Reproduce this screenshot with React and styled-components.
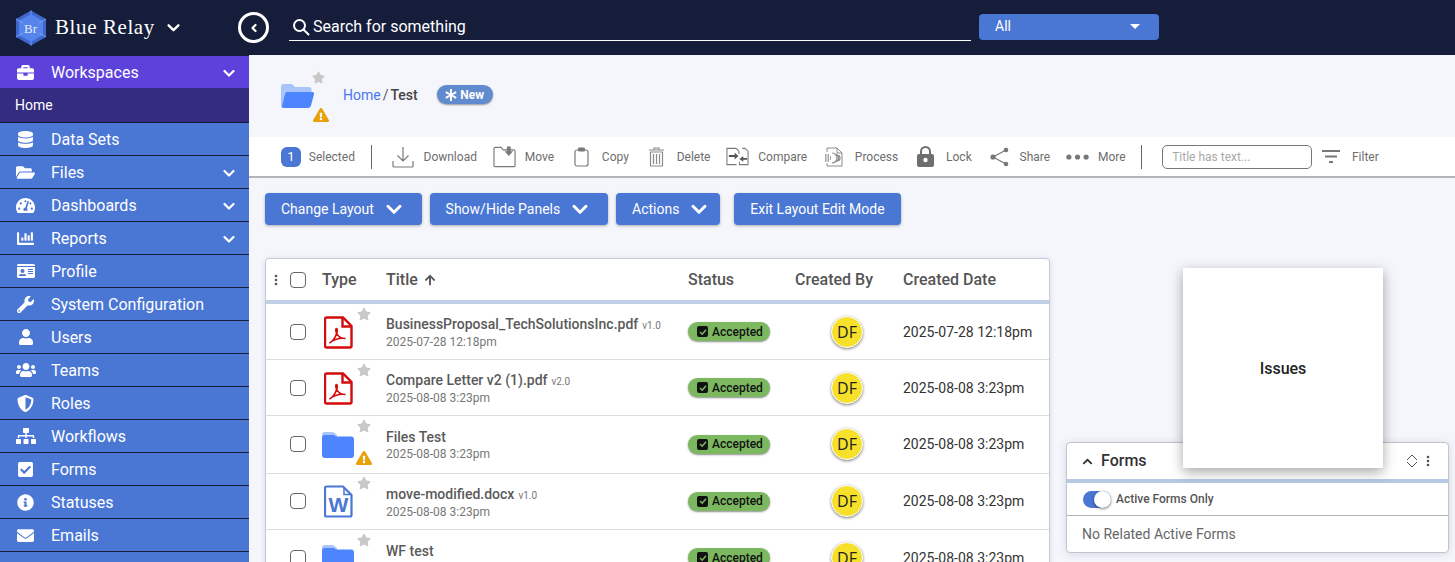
import React from 'react';
import styled, {createGlobalStyle} from 'styled-components';
import {
    FaBriefcase, FaDatabase, FaFolderOpen, FaTachometerAlt, FaChartBar, FaIdCard, FaWrench, FaUser,
    FaUsers, FaShieldAlt, FaSitemap, FaCheckSquare, FaInfoCircle, FaEnvelope, FaStar, FaFolder,
    FaExclamationTriangle, FaAsterisk, FaArrowUp, FaChevronUp
} from 'react-icons/fa';

const GlobalStyle = createGlobalStyle`
  html, body {
    margin: 0;
    height: 562px;
    overflow: hidden;
    background: #f5f6fb;
    font-family: Roboto, "Liberation Sans", sans-serif;
  }
  * { box-sizing: border-box; }
`

const navItems = [
    {label: 'Data Sets', icon: FaDatabase, size: 17},
    {label: 'Files', icon: FaFolderOpen, size: 19, more: true},
    {label: 'Dashboards', icon: FaTachometerAlt, size: 19, more: true},
    {label: 'Reports', icon: FaChartBar, size: 17, more: true},
    {label: 'Profile', icon: FaIdCard, size: 18},
    {label: 'System Configuration', icon: FaWrench, size: 17},
    {label: 'Users', icon: FaUser, size: 16},
    {label: 'Teams', icon: FaUsers, size: 20},
    {label: 'Roles', icon: FaShieldAlt, size: 17},
    {label: 'Workflows', icon: FaSitemap, size: 20},
    {label: 'Forms', icon: FaCheckSquare, size: 17},
    {label: 'Statuses', icon: FaInfoCircle, size: 17},
    {label: 'Emails', icon: FaEnvelope, size: 17},
    {label: 'Templates', icon: FaFolder, size: 17},
]

const rows = [
    {title: 'BusinessProposal_TechSolutionsInc.pdf', version: 'v1.0', date: '2025-07-28 12:18pm', kind: 'pdf', height: 56},
    {title: 'Compare Letter v2 (1).pdf', version: 'v2.0', date: '2025-08-08 3:23pm', kind: 'pdf', height: 56},
    {title: 'Files Test', date: '2025-08-08 3:23pm', kind: 'folder', warn: true, height: 58, lift: 1},
    {title: 'move-modified.docx', version: 'v1.0', date: '2025-08-08 3:23pm', kind: 'word', height: 56, lift: 1},
    {title: 'WF test', date: '2025-08-08 3:23pm', kind: 'folder', height: 56},
]

const Chevron = ({size = 12, width = 2.2}) => (
    <svg width={size} height={size} viewBox="0 0 12 12" fill="none" stroke="currentColor" strokeWidth={width} strokeLinecap="round" strokeLinejoin="round">
        <polyline points="1.5,4 6,8.5 10.5,4"/>
    </svg>
)

const Logo = () => (
    <svg width="32" height="36" viewBox="0 0 32 36">
        <polygon points="16,0.5 31,9 31,27 16,35.5 1,27 1,9" fill="#3f66cc"/>
        <polygon points="16,4 28,11 28,25 16,32 4,25 4,11" fill="#5584ea"/>
        <path d="M16 0.500V4M1 9l7 4M31 9l-7 4M1 27l7-4M31 27l-7-4M16 35.500V32" stroke="#7b9ff0" strokeWidth="1"/>
        <text x="15.500" y="23" textAnchor="middle" fontFamily="Liberation Serif, serif" fontSize="13" fill="#e6ecfc">Br</text>
    </svg>
)

const PdfIcon = () => (
    <svg width="29" height="33" viewBox="0 0 29 33" fill="none" stroke="#d40b0b">
        <path d="M2.500 1.500H19L27.500 10V30a1.500 1.500 0 0 1-1.500 1.500H2.500A1.500 1.500 0 0 1 1 30V3a1.500 1.500 0 0 1 1.500-1.500Z" strokeWidth="2.400"/>
        <path d="M18.500 2V10.500H27" strokeWidth="2.400"/>
        <path d="M5.500 27c3-1.500 6-6 7.500-10.500.6-2 .4-4-.5-4s-1 2 0 4.500c1.500 3.500 4 5.500 9 5.500-4-.5-11 .5-16 4.500Z" strokeWidth="1.600"/>
    </svg>
)

const WordIcon = () => (
    <svg width="29" height="33" viewBox="0 0 29 33" fill="none" stroke="#4a76d4">
        <path d="M2.500 1.500H19L27.500 10V30a1.500 1.500 0 0 1-1.500 1.500H2.500A1.500 1.500 0 0 1 1 30V3a1.500 1.500 0 0 1 1.500-1.500Z" strokeWidth="2.200"/>
        <path d="M20 3V9.500H26.500" strokeWidth="1.500"/>
        <text x="14.500" y="27" textAnchor="middle" fontFamily="Liberation Sans, sans-serif" fontWeight="700" fontSize="21" fill="#4a76d4" stroke="none">W</text>
    </svg>
)

const ClosedFolder = () => (
    <svg width="32" height="26" viewBox="0 0 32 26">
        <path d="M0 3a3 3 0 0 1 3-3h8l4 3v4H0Z" fill="#a9c4fb"/>
        <path d="M0 6a3 3 0 0 1 3-3h9l2 1.500h15a3 3 0 0 1 3 3V23a3 3 0 0 1-3 3H3a3 3 0 0 1-3-3Z" fill="#4d85ff"/>
    </svg>
)

const OpenFolder = () => (
    <svg width="33" height="24" viewBox="0 0 33 24">
        <path d="M0 3a3 3 0 0 1 3-3h8l3 3h14a2.500 2.500 0 0 1 2.500 2.500V8H4L2 24a2 2 0 0 1-2-2Z" fill="#a9c4fb"/>
        <path d="M5.500 8H31a2 2 0 0 1 2 2.300L30 21.500A3 3 0 0 1 27 24H2.500a1.500 1.500 0 0 1-1.400-2L4 9.500A2 2 0 0 1 5.500 8Z" fill="#4d85ff"/>
    </svg>
)

const toolIcons = {
    download: (
        <svg width="22" height="22" viewBox="0 0 22 22" fill="none" stroke="#7a7a7a" strokeWidth="1.200">
            <path d="M11 1v14M5.500 9.500 11 15l5.500-5.500"/>
            <path d="M1 15v5a1 1 0 0 0 1 1h18a1 1 0 0 0 1-1v-5"/>
        </svg>
    ),
    move: (
        <svg width="24" height="22" viewBox="0 0 24 22" fill="none" stroke="#7a7a7a" strokeWidth="1.200">
            <path d="M1 20V2.500A1.500 1.500 0 0 1 2.500 1h6l2 2.500h11A1.500 1.500 0 0 1 23 5v15a1 1 0 0 1-1 1H2a1 1 0 0 1-1-1Z"/>
            <path d="M14.500 0h4v5h2.500l-4.500 5-4.500-5h2.500Z" fill="#7a7a7a" stroke="none"/>
        </svg>
    ),
    copy: (
        <svg width="15" height="20" viewBox="0 0 15 20" fill="none" stroke="#7a7a7a" strokeWidth="1.200">
            <rect x="1" y="3" width="13" height="16" rx="2"/>
            <rect x="4.500" y="1" width="6" height="3" rx="1" fill="#7a7a7a"/>
        </svg>
    ),
    trash: (
        <svg width="15" height="20" viewBox="0 0 15 20" fill="none" stroke="#8a8a8a" strokeWidth="1.200">
            <path d="M0 3h15M5 3V1h5v2"/>
            <path d="M1.500 5h12v14h-12ZM4.500 7v10M7.500 7v10M10.500 7v10"/>
        </svg>
    ),
    compare: (
        <svg width="24" height="19" viewBox="0 0 24 19" fill="none" stroke="#7a7a7a" strokeWidth="1.100">
            <path d="M11 18H1V1h9.500l3 3v3"/>
            <path d="M17 1h3l3 3v14h-9v-3"/>
            <path d="M3 8h6V5.500l4 3.500-4 3.500V10H3Z" fill="#555" stroke="none"/>
            <path d="M22 13h-4v2l-4-3 4-3v2h4Z" fill="#555" stroke="none"/>
        </svg>
    ),
    process: (
        <svg width="18" height="20" viewBox="0 0 18 20" fill="none" stroke="#8a8a8a" strokeWidth="1">
            <path d="M2 5V1h10l5 5v13H2v-3"/>
            <path d="M12 1v5h5"/>
            <path d="M0 8h5M0 10h6M0 12h6M0 14h5" strokeWidth="1.300" strokeDasharray="1.500 1"/>
            <path d="M7 6a5 5 0 0 1 0 10M9.500 7a4 4 0 0 1 0 8M12 8a3 3 0 0 1 0 6" strokeWidth="1.200"/>
        </svg>
    ),
    lock: (
        <svg width="17" height="21" viewBox="0 0 17 21">
            <path d="M4 9V5.500a4.500 4.500 0 0 1 9 0V9" fill="none" stroke="#6e6e6e" strokeWidth="2"/>
            <rect x="0" y="8" width="17" height="13" rx="2" fill="#6e6e6e"/>
            <circle cx="8.500" cy="14" r="2.200" fill="#fff"/>
        </svg>
    ),
    share: (
        <svg width="19" height="20" viewBox="0 0 19 20" fill="#777" stroke="#777">
            <path d="M16 3 3 10l13 7" fill="none" strokeWidth="1.200"/>
            <circle cx="16" cy="3" r="2.300" stroke="none"/>
            <circle cx="3" cy="10" r="2.600" stroke="none"/>
            <circle cx="16" cy="17" r="2.300" stroke="none"/>
        </svg>
    ),
    more: (
        <svg width="24" height="8" viewBox="0 0 24 8" fill="#777">
            <circle cx="3" cy="4" r="2.700"/>
            <circle cx="12" cy="4" r="2.700"/>
            <circle cx="21" cy="4" r="2.700"/>
        </svg>
    ),
    filter: (
        <svg width="18" height="14" viewBox="0 0 18 14" fill="#777">
            <rect x="0" y="0" width="18" height="2"/>
            <rect x="3" y="5.500" width="12" height="2"/>
            <rect x="7" y="11" width="4" height="2"/>
        </svg>
    ),
}

const tools = [
    {label: 'Download', icon: toolIcons.download},
    {label: 'Move', icon: toolIcons.move},
    {label: 'Copy', icon: toolIcons.copy},
    {label: 'Delete', icon: toolIcons.trash},
    {label: 'Compare', icon: toolIcons.compare},
    {label: 'Process', icon: toolIcons.process},
    {label: 'Lock', icon: toolIcons.lock},
    {label: 'Share', icon: toolIcons.share},
    {label: 'More', icon: toolIcons.more},
]

const Kebab = () => (
    <svg width="4" height="12" viewBox="0 0 4 12" fill="#555">
        <circle cx="2" cy="2" r="1.300"/>
        <circle cx="2" cy="6" r="1.300"/>
        <circle cx="2" cy="10" r="1.300"/>
    </svg>
)

const App = () => {
    return (
        <Page>
            <GlobalStyle/>
            <TopBar>
                <Brand>
                    <Logo/>
                    <BrandName>Blue Relay</BrandName>
                    <Chevron size={13}/>
                </Brand>
                <BackButton>
                    <svg width="10" height="10" viewBox="0 0 10 10" fill="none" stroke="#fff" strokeWidth="2.200" strokeLinecap="round" strokeLinejoin="round">
                        <polyline points="6.500,2 3.500,5 6.500,8"/>
                    </svg>
                </BackButton>
                <SearchField>
                    <svg width="18" height="18" viewBox="0 0 18 18" fill="none" stroke="#fff" strokeWidth="2">
                        <circle cx="7.500" cy="7.500" r="5.500"/>
                        <path d="M11.500 11.500 16.500 16.500" strokeLinecap="round"/>
                    </svg>
                    Search for something
                </SearchField>
                <ScopeSelect>
                    All
                    <Caret/>
                </ScopeSelect>
            </TopBar>
            <Body>
                <Sidebar>
                    <NavGroup>
                        <FaBriefcase size={17}/>
                        <span>Workspaces</span>
                        <NavChevron><Chevron/></NavChevron>
                    </NavGroup>
                    <NavSub>Home</NavSub>
                    {navItems.map(item => (
                        <NavRow key={item.label}>
                            <NavIcon><item.icon size={item.size}/></NavIcon>
                            <span>{item.label}</span>
                            {item.more && <NavChevron><Chevron/></NavChevron>}
                        </NavRow>
                    ))}
                </Sidebar>
                <Main>
                    <Crumbs>
                        <CrumbIcon>
                            <OpenFolder/>
                            <HeadStar><FaStar size={13}/></HeadStar>
                            <HeadWarn><FaExclamationTriangle size={16}/></HeadWarn>
                        </CrumbIcon>
                        <CrumbLink>Home</CrumbLink>
                        <CrumbSep>/</CrumbSep>
                        <CrumbHere>Test</CrumbHere>
                        <NewPill><FaAsterisk size={12}/>New</NewPill>
                    </Crumbs>
                    <Toolbar>
                        <SelectedBadge>1</SelectedBadge>
                        <ToolLabel>Selected</ToolLabel>
                        <ToolDivider/>
                        {tools.map(t => (
                            <Tool key={t.label}>
                                <ToolIcon>{t.icon}</ToolIcon>
                                <ToolLabel>{t.label}</ToolLabel>
                            </Tool>
                        ))}
                        <ToolDivider/>
                        <TitleInput placeholder="Title has text..."/>
                        <Tool>
                            <ToolIcon>{toolIcons.filter}</ToolIcon>
                            <ToolLabel>Filter</ToolLabel>
                        </Tool>
                    </Toolbar>
                    <Actions>
                        <ActionButton>Change Layout<Chevron size={16}/></ActionButton>
                        <ActionButton>Show/Hide Panels<Chevron size={16}/></ActionButton>
                        <ActionButton $right={13}>Actions<Chevron size={16}/></ActionButton>
                        <ActionButton $right={16} $apart>Exit Layout Edit Mode</ActionButton>
                    </Actions>
                    <Panels>
                        <TableCard>
                            <HeadRow>
                                <KebabCell><Kebab/></KebabCell>
                                <Check/>
                                <span>Type</span>
                                <TitleHead>Title <FaArrowUp size={12}/></TitleHead>
                                <span>Status</span>
                                <span>Created By</span>
                                <span>Created Date</span>
                            </HeadRow>
                            {rows.map(r => (
                                <Row key={r.title} $height={r.height} $lift={r.lift}>
                                    <span/>
                                    <Check/>
                                    <TypeCell $indent={r.kind === 'folder' ? 0 : 2}>
                                        {r.kind === 'pdf' && <PdfIcon/>}
                                        {r.kind === 'word' && <WordIcon/>}
                                        {r.kind === 'folder' && <ClosedFolder/>}
                                        <RowStar><FaStar size={14}/></RowStar>
                                        {r.warn && <RowWarn><FaExclamationTriangle size={16}/></RowWarn>}
                                    </TypeCell>
                                    <TitleCell>
                                        <FileName>{r.title}{r.version && <Version>{r.version}</Version>}</FileName>
                                        <FileDate>{r.date}</FileDate>
                                    </TitleCell>
                                    <div>
                                        <StatusPill>
                                            <StatusBox>
                                                <svg width="8" height="8" viewBox="0 0 8 8" fill="none" stroke="#7cb860" strokeWidth="1.500">
                                                    <polyline points="1,4 3.200,6.200 7,1.800"/>
                                                </svg>
                                            </StatusBox>
                                            Accepted
                                        </StatusPill>
                                    </div>
                                    <AvatarCell><Avatar>DF</Avatar></AvatarCell>
                                    <CreatedDate>{r.date}</CreatedDate>
                                </Row>
                            ))}
                        </TableCard>
                        <FormsCard>
                            <FormsHead>
                                <FaChevronUp size={11}/>
                                <FormsTitle>Forms</FormsTitle>
                                <svg width="12" height="14" viewBox="0 0 12 14" fill="none" stroke="#555" strokeWidth="1">
                                    <path d="M1 6 6 1l5 5M1 8l5 5 5-5"/>
                                </svg>
                                <Kebab/>
                            </FormsHead>
                            <ToggleRow>
                                <Toggle><Knob/></Toggle>
                                Active Forms Only
                            </ToggleRow>
                            <EmptyNote>No Related Active Forms</EmptyNote>
                        </FormsCard>
                    </Panels>
                    <FloatingCard>Issues</FloatingCard>
                </Main>
            </Body>
        </Page>
    );
};

const Page = styled.div`
  height: 562px;
  overflow: hidden;
`
const TopBar = styled.header`
  height: 55px;
  background: #151d3b;
  display: flex;
  align-items: center;
  color: #fff;
`
const Brand = styled.div`
  width: 238px;
  padding-left: 15px;
  display: flex;
  align-items: center;
  color: #fff;
`
const BrandName = styled.span`
  font-family: "Liberation Serif", serif;
  font-size: 21px;
  letter-spacing: 0.6px;
  margin: 0 12px 0 8px;
`
const BackButton = styled.div`
  width: 31px;
  height: 31px;
  border: 3px solid #fff;
  border-radius: 50%;
  display: flex;
  align-items: center;
  justify-content: center;
`
const SearchField = styled.div`
  width: 682px;
  height: 26px;
  margin: 0 8px 0 20px;
  padding: 0 0 1px 3px;
  border-bottom: 1px solid #fff;
  display: flex;
  align-items: center;
  gap: 3px;
  font-size: 16px;
`
const ScopeSelect = styled.div`
  width: 180px;
  height: 26px;
  margin-bottom: 1px;
  background: #4a76d4;
  border-radius: 4px;
  padding: 0 19px 2px 16px;
  display: flex;
  align-items: center;
  justify-content: space-between;
  font-size: 14px;
`
const Caret = styled.span`
  width: 0;
  height: 0;
  border-left: 5px solid transparent;
  border-right: 5px solid transparent;
  border-top: 5px solid #fff;
`
const Body = styled.div`
  display: flex;
  height: 507px;
`
const Sidebar = styled.nav`
  width: 249px;
  flex: none;
  background: #4a76d4;
  color: #fff;
  font-size: 16px;
  padding-top: 1px;
  box-shadow: inset 0 1px 0 #151d3b;
`
const NavGroup = styled.div`
  height: 32px;
  background: #5c42da;
  display: flex;
  align-items: center;
  gap: 17px;
  padding-left: 17px;
  position: relative;
`
const NavSub = styled.div`
  height: 35px;
  background: #332c80;
  border-bottom: 1px solid #151d3b;
  font-size: 14px;
  padding-left: 15px;
  display: flex;
  align-items: center;
`
const NavRow = styled.div`
  height: 33px;
  border-bottom: 1px solid #151d3b;
  display: flex;
  align-items: center;
  position: relative;
`
const NavIcon = styled.span`
  width: 51px;
  display: flex;
  justify-content: center;
`
const NavChevron = styled.span`
  position: absolute;
  right: 14px;
  top: 11px;
  display: flex;
`
const Main = styled.main`
  flex: 1;
  position: relative;
  min-width: 0;
`
const Crumbs = styled.div`
  height: 82px;
  padding: 0 0 3px 32px;
  display: flex;
  align-items: center;
  font-size: 14px;
`
const CrumbIcon = styled.div`
  position: relative;
  width: 62px;
  display: flex;
  padding-top: 2px;
`
const HeadStar = styled.span`
  position: absolute;
  left: 31px;
  top: -11px;
  color: #c8c8c8;
`
const HeadWarn = styled.span`
  position: absolute;
  left: 32px;
  top: 25px;
  color: #e8a208;
`
const CrumbLink = styled.span`
  color: #4a76f0;
`
const CrumbSep = styled.span`
  color: #555;
  margin: 0 2px;
`
const CrumbHere = styled.span`
  color: #444;
  font-weight: 500;
`
const NewPill = styled.span`
  height: 19px;
  width: 56px;
  margin-left: 19px;
  border-radius: 10px;
  background: #618bcf;
  color: #fff;
  font-size: 12px;
  font-weight: 700;
  display: flex;
  align-items: center;
  justify-content: center;
  gap: 3px;
  box-shadow: 0 1px 2px rgba(0, 0, 0, .4);
`
const Toolbar = styled.div`
  height: 41px;
  background: #fff;
  border-bottom: 2px solid #b5b5b8;
  padding-left: 32px;
  display: flex;
  align-items: center;
  gap: 15.8px;
`
const SelectedBadge = styled.span`
  width: 20px;
  height: 20px;
  border-radius: 6px;
  background: #4a76d4;
  color: #fff;
  font-size: 13px;
  display: flex;
  align-items: center;
  justify-content: center;
  margin-right: -8px;
`
const ToolLabel = styled.span`
  font-size: 12px;
  color: #6e6e6e;
`
const ToolDivider = styled.span`
  width: 1px;
  height: 24px;
  background: #666;
  margin-right: 4px;
`
const Tool = styled.div`
  display: flex;
  align-items: center;
  gap: 9px;
`
const ToolIcon = styled.span`
  width: 23px;
  display: flex;
  justify-content: center;
`
const TitleInput = styled.input`
  width: 150px;
  height: 24px;
  margin-right: -8px;
  border: 1px solid #777;
  border-radius: 5px;
  padding: 0 9px;
  font-family: inherit;
  font-size: 12px;
  &::placeholder {
    color: #aaa;
  }
`
const Actions = styled.div`
  display: flex;
  gap: 7.8px;
  padding: 15px 0 0 16px;
`
const ActionButton = styled.div`
  height: 32px;
  margin-left: ${p => p.$apart ? '6px' : '0'};
  padding: 0 ${p => p.$right || 20}px 0 16px;
  background: #4a76d4;
  border-radius: 4px;
  color: #fff;
  font-size: 14px;
  display: flex;
  align-items: center;
  gap: 12px;
  box-shadow: 0 1px 3px rgba(0, 0, 0, .3);
`
const Panels = styled.div`
  display: flex;
  align-items: flex-start;
  gap: 16px;
  padding: 33px 0 0 16px;
`
const TableCard = styled.section`
  width: 785px;
  height: 400px;
  flex: none;
  background: #fff;
  border: 1px solid #c6cad4;
  border-radius: 4px;
  box-shadow: 0 1px 5px rgba(70, 90, 150, .2);
`
const columns = '24px 32px 64px 302px 107px 108px 1fr'
const HeadRow = styled.div`
  height: 45px;
  border-bottom: 4px solid #bfcfe6;
  display: grid;
  grid-template-columns: ${columns};
  align-items: center;
  font-size: 16px;
  font-weight: 500;
  color: #555;
`
const KebabCell = styled.span`
  display: flex;
  padding-left: 8px;
`
const TitleHead = styled.span`
  display: flex;
  align-items: center;
  gap: 6px;
`
const Row = styled.div`
  height: ${p => p.$height}px;
  padding-bottom: ${p => p.$lift || 0}px;
  border-bottom: 1px solid #dedede;
  display: grid;
  grid-template-columns: ${columns};
  align-items: center;
`
const Check = styled.span`
  width: 16px;
  height: 16px;
  border: 1px solid #666;
  border-radius: 4px;
  background: #fff;
`
const TypeCell = styled.div`
  position: relative;
  height: 34px;
  display: flex;
  padding-left: ${p => p.$indent}px;
  align-items: center;
  padding-top: 1px;
`
const RowStar = styled.span`
  position: absolute;
  left: 35px;
  top: -9px;
  color: #c8c8c8;
`
const RowWarn = styled.span`
  position: absolute;
  left: 34px;
  top: 23px;
  color: #e8a208;
`
const TitleCell = styled.div`
  padding-top: 3px;
`
const FileName = styled.div`
  font-size: 14px;
  font-weight: 500;
  color: #5a5a5a;
  white-space: nowrap;
  line-height: 17px;
`
const Version = styled.span`
  font-size: 10px;
  font-weight: 400;
  color: #777;
  margin-left: 4px;
`
const FileDate = styled.div`
  font-size: 12px;
  color: #777;
  line-height: 16px;
`
const StatusPill = styled.span`
  width: 82px;
  height: 19px;
  border-radius: 10px;
  background: #7cb860;
  color: #111;
  font-size: 12px;
  font-weight: 500;
  display: flex;
  align-items: center;
  gap: 4px;
  padding-left: 9px;
  box-shadow: 0 1px 2px rgba(0, 0, 0, .45);
`
const StatusBox = styled.span`
  width: 11px;
  height: 11px;
  border-radius: 2px;
  background: #111;
  display: flex;
  align-items: center;
  justify-content: center;
`
const AvatarCell = styled.div`
  display: flex;
  padding-left: 36px;
`
const Avatar = styled.span`
  width: 32px;
  height: 32px;
  border: 1px solid #fff;
  border-radius: 50%;
  background: #f6e02a;
  color: #222;
  font-family: "Open Sans", sans-serif;
  font-size: 16px;
  display: flex;
  align-items: center;
  justify-content: center;
  box-shadow: 0 1px 3px rgba(0, 0, 0, .5);
`
const CreatedDate = styled.span`
  font-size: 14px;
  color: #333;
  white-space: nowrap;
`
const FormsCard = styled.section`
  width: 383px;
  height: 111px;
  margin-top: 184px;
  background: #fff;
  border-radius: 4px;
  border: 1px solid #c4c4c8;
  box-shadow: 0 1px 8px rgba(70, 90, 150, .18);
  flex: none;
`
const FormsHead = styled.div`
  height: 40px;
  border-bottom: 4px solid #b5c8e4;
  padding: 0 18px 0 15px;
  display: flex;
  align-items: center;
  color: #333;
  gap: 8px;
`
const FormsTitle = styled.span`
  flex: 1;
  font-size: 16px;
  font-weight: 500;
  padding-bottom: 2px;
`
const ToggleRow = styled.div`
  height: 33px;
  border-bottom: 1px solid #b0b0b0;
  padding-left: 16px;
  display: flex;
  align-items: center;
  gap: 5px;
  font-size: 12px;
  font-weight: 500;
  color: #555;
`
const Toggle = styled.span`
  position: relative;
  width: 28px;
  height: 17px;
  border-radius: 9px;
  background: #4a76d4;
`
const Knob = styled.span`
  position: absolute;
  right: 0;
  top: 0;
  width: 17px;
  height: 17px;
  border-radius: 50%;
  background: #fff;
  box-shadow: 0 1px 3px rgba(0, 0, 0, .5);
`
const EmptyNote = styled.div`
  padding: 10px 0 0 15px;
  font-size: 14px;
  color: #666;
`
const FloatingCard = styled.div`
  position: absolute;
  left: 934px;
  top: 213px;
  width: 200px;
  height: 200px;
  background: #fff;
  color: #222;
  font-size: 16px;
  font-weight: 500;
  display: flex;
  align-items: center;
  justify-content: center;
  box-shadow: 0 4px 12px rgba(0, 0, 0, .35);
`

export default App;
